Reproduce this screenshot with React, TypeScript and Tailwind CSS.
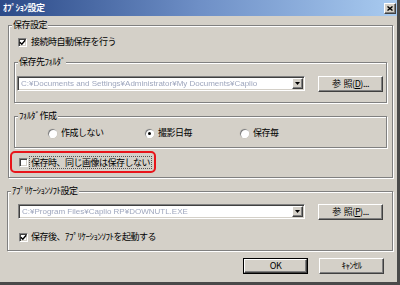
import type { ReactNode } from "react";

const SUNKEN =
  "border border-t-[#808080] border-l-[#808080] border-b-white border-r-white shadow-[inset_1px_1px_0_#404040,inset_-1px_-1px_0_#d4d0c8]";
const RAISED =
  "border border-t-white border-l-white border-b-[#404040] border-r-[#404040] shadow-[inset_-1px_-1px_0_#808080]";

function Check({ checked }: { checked?: boolean }) {
  return (
    <span className={`flex h-[9px] w-[9px] shrink-0 items-center justify-center bg-white ${SUNKEN}`}>
      {checked && (
        <svg width="7" height="7" viewBox="0 0 7 7">
          <path d="M0.8 3.2 L2.8 5.2 L6.2 1.2" stroke="#000" strokeWidth="1.4" fill="none" />
        </svg>
      )}
    </span>
  );
}

function Radio({ checked, label, className }: { checked?: boolean; label: string; className?: string }) {
  return (
    <div className={`flex items-center gap-[4px] ${className ?? ""}`}>
      <span className="flex h-[9px] w-[9px] items-center justify-center rounded-full bg-white shadow-[inset_1px_1px_0_#808080,inset_-1px_-1px_0_#fff,0_0_0_0.5px_#c8c4bc]">
        {checked && <span className="h-[3px] w-[3px] rounded-full bg-black" />}
      </span>
      <span>{label}</span>
    </div>
  );
}

function Group({ label, className, children }: { label: string; className?: string; children?: ReactNode }) {
  return (
    <div className={`relative shrink-0 border border-[#808080] shadow-[inset_1px_1px_0_#fff,1px_1px_0_#fff] ${className ?? ""}`}>
      <span className="absolute -top-[7px] left-[3px] whitespace-nowrap bg-[#d4d0c8] px-[1px] leading-[12px]">{label}</span>
      {children}
    </div>
  );
}

function Combo({ text, className }: { text: string; className?: string }) {
  return (
    <div className={`flex h-[15px] items-stretch bg-white ${SUNKEN} ${className ?? ""}`}>
      <span className="flex-1 overflow-hidden whitespace-nowrap pl-[3px] text-[8px] leading-[13px] tracking-normal text-[#9ea6bd] blur-[0.7px] font-['Liberation_Sans',sans-serif]">
        {text}
      </span>
      <span className={`m-[1px] flex w-[11px] items-center justify-center bg-[#d4d0c8] ${RAISED}`}>
        <svg width="5" height="3" viewBox="0 0 5 3">
          <path d="M0 0 H5 L2.5 3 Z" fill="#000" />
        </svg>
      </span>
    </div>
  );
}

function Button({ children, def, className }: { children: ReactNode; def?: boolean; className?: string }) {
  const inner = (
    <div className={`flex h-full w-full items-center justify-center whitespace-nowrap bg-[#d4d0c8] ${RAISED}`}>{children}</div>
  );
  return (
    <div className={`h-[16px] w-[65px] shrink-0 ${def ? "border border-black" : ""} ${className ?? ""}`}>{inner}</div>
  );
}

export default function App() {
  return (
    <div className="h-[285px] w-[400px] overflow-hidden border-r-[3px] border-b-[3px] border-[#4a4a4a] bg-[#d4d0c8] text-[9px] leading-[12px] tracking-[-0.5px] text-black font-['Noto_Sans_CJK_JP','Liberation_Sans',sans-serif]">
      <div className="flex h-[16px] items-start bg-gradient-to-r from-[#2c4a88] via-[#6e8fc6] to-[#a9cbf0]">
        <span className="pl-[3px] pt-[2px] font-bold text-white">ｵﾌﾟｼｮﾝ設定</span>
        <span className={`ml-auto mr-[1px] mt-[3px] flex h-[11px] w-[12px] items-center justify-center bg-[#d4d0c8] ${RAISED}`}>
          <svg width="6" height="5" viewBox="0 0 6 5">
            <path d="M0.5 0.5 L5.5 4.5 M5.5 0.5 L0.5 4.5" stroke="#000" strokeWidth="1.4" />
          </svg>
        </span>
      </div>

      <div className="flex flex-col pl-[8px] pt-[9px]">
        <Group label="保存設定" className="h-[153px] w-[385px]">
          <div className="flex flex-col pt-[10px]">
            <div className="flex h-[12px] items-center gap-[4px] pl-[9px]">
              <Check checked />
              <span>接続時自動保存を行う</span>
            </div>

            <Group label="保存先ﾌｫﾙﾀﾞ" className="ml-[5px] mt-[14px] h-[41px] w-[373px]">
              <div className="flex items-start gap-[13px] pl-[2px] pt-[13px]">
                <Combo text="C:¥Documents and Settings¥Administrator¥My Documents¥Caplio" className="w-[288px]" />
                <Button>
                  参&nbsp;&nbsp;照(<u>D</u>)...
                </Button>
              </div>
            </Group>

            <Group label="ﾌｫﾙﾀﾞ作成" className="ml-[5px] mt-[13px] h-[32px] w-[373px]">
              <div className="flex h-full items-center pl-[33px] pt-[2px]">
                <Radio label="作成しない" className="w-[97px]" />
                <Radio label="撮影日毎" checked className="w-[95px]" />
                <Radio label="保存毎" />
              </div>
            </Group>

            <div className="ml-[1px] mt-[3px] flex h-[22px] w-[146px] items-center gap-[2px] rounded-[5px] border-2 border-[#e8141a] pl-[7px]">
              <Check />
              <span className="whitespace-nowrap px-[1px] leading-[11px] outline outline-1 outline-dotted outline-[#555]">
                保存時、同じ画像は保存しない
              </span>
            </div>
          </div>
        </Group>

        <Group label="ｱﾌﾟﾘｹｰｼｮﾝｿﾌﾄ設定" className="-ml-[1px] mt-[13px] h-[60px] w-[386px]">
          <div className="flex flex-col pt-[12px]">
            <div className="flex items-start gap-[13px] pl-[10px]">
              <Combo text="C:¥Program Files¥Caplio RP¥DOWNUTL.EXE" className="w-[287px]" />
              <Button>
                参&nbsp;&nbsp;照(<u>P</u>)...
              </Button>
            </div>
            <div className="mt-[11px] flex h-[12px] items-center gap-[3px] pl-[11px]">
              <Check checked />
              <span>保存後、ｱﾌﾟﾘｹｰｼｮﾝｿﾌﾄを起動する</span>
            </div>
          </div>
        </Group>

        <div className="mt-[7px] flex gap-[11px] pl-[235px]">
          <Button def>OK</Button>
          <Button>ｷｬﾝｾﾙ</Button>
        </div>
      </div>
    </div>
  );
}
